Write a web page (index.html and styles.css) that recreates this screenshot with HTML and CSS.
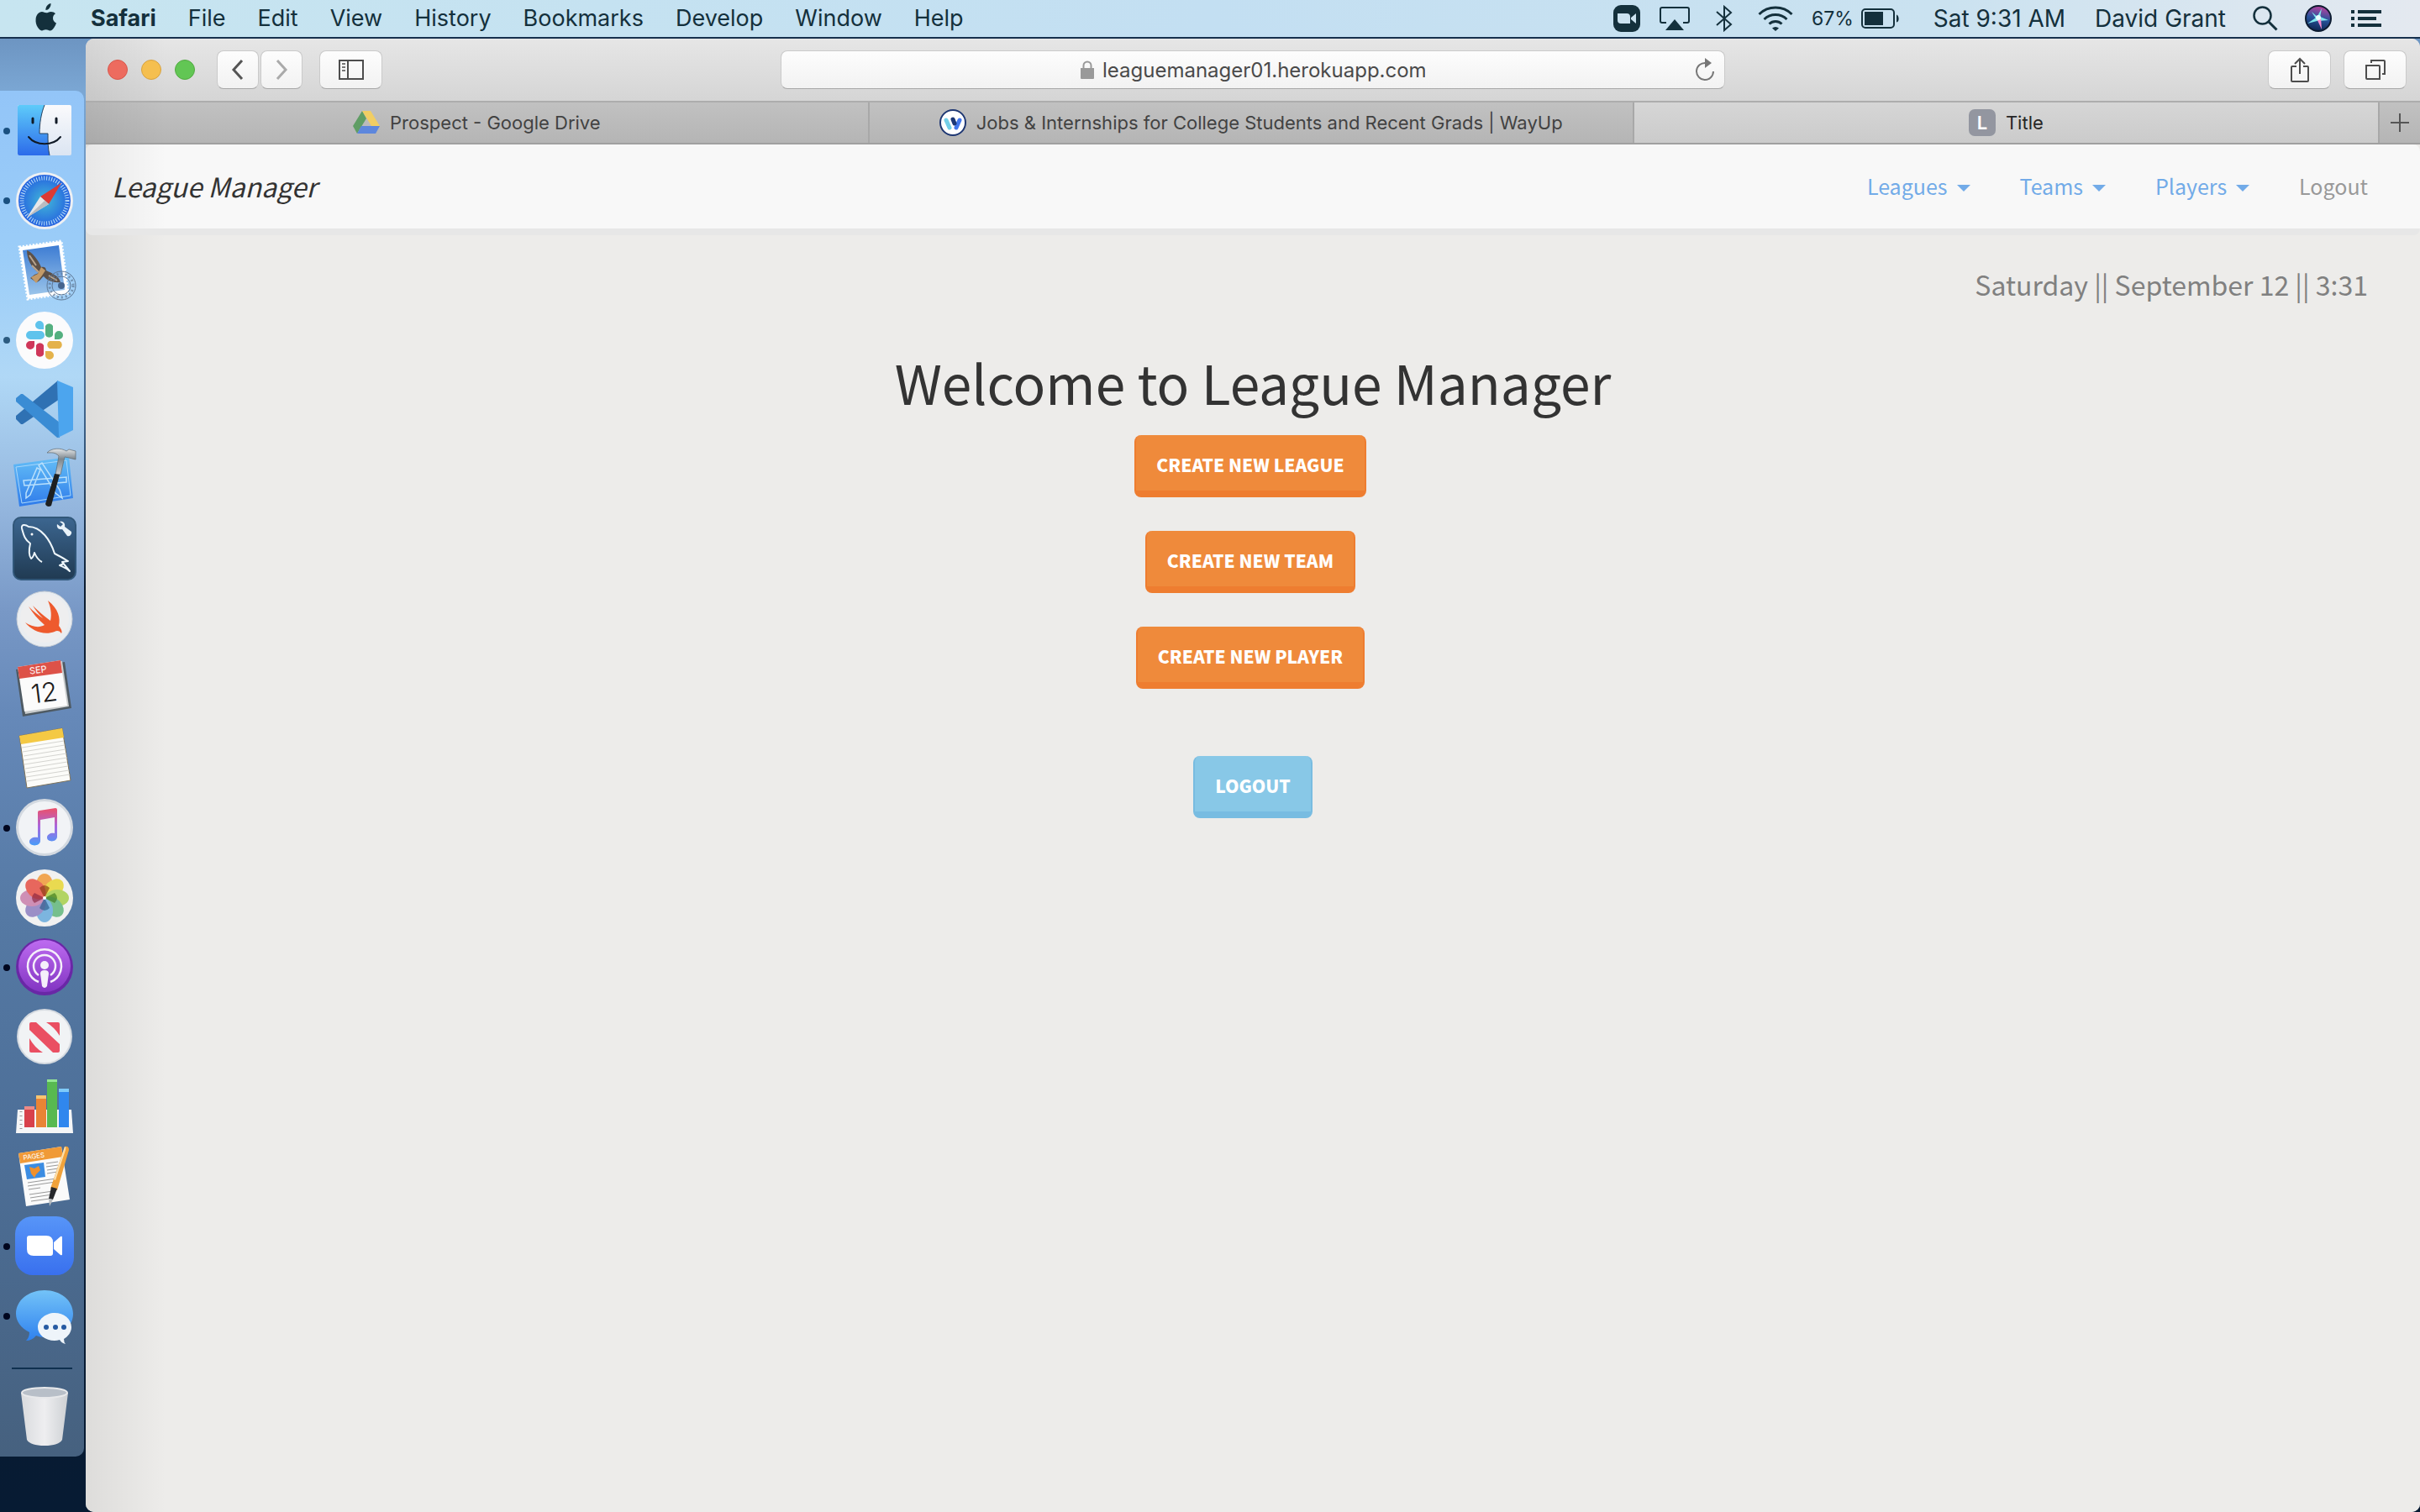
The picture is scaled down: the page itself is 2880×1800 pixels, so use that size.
FILE: index.html
```html
<!DOCTYPE html>
<html lang="en">
<head>
<meta charset="utf-8">
<meta name="viewport" content="width=device-width, initial-scale=1">
<title>Title</title>
<link rel="stylesheet" href="styles.css">
</head>
<body>
<header class="menubar">
  <nav class="menus" aria-label="Application menu">
    <svg class="apple" width="26" height="38" viewBox="0 0 26 38" aria-hidden="true"><path fill="currentColor" d="M18.5 1c.2 2.300-.6 4.200-1.800 5.700-1.200 1.500-2.700 2.300-4.300 2.200-.2-2.200.7-4.200 1.900-5.500C15.500 2 17.200 1.100 18.500 1zM24 13.200c-2 1.200-3 3-3 5.300 0 2.800 1.500 4.800 4 5.900-.6 1.900-1.500 3.700-2.600 5.300-1.500 2.200-2.900 3.800-4.900 3.800s-2.600-1.200-4.900-1.200-3.100 1.200-4.900 1.200c-1.900 0-3.300-1.700-4.800-3.900C1 26.700.2 23.200.6 19.600c.4-4.900 3.500-8.600 7.300-8.600 2.100 0 3.500 1.300 5.200 1.300 1.600 0 3-1.400 5.600-1.400 2.100 0 4 .9 5.300 2.300z"/></svg>
    <a class="app-name" href="#">Safari</a>
    <a href="#">File</a>
    <a href="#">Edit</a>
    <a href="#">View</a>
    <a href="#">History</a>
    <a href="#">Bookmarks</a>
    <a href="#">Develop</a>
    <a href="#">Window</a>
    <a href="#">Help</a>
  </nav>
  <div class="status">
    <svg width="32" height="32" viewBox="0 0 32 32" aria-hidden="true"><rect width="32" height="32" rx="9" fill="currentColor"/><path fill="#cbe2f0" d="M5 10h11a4 4 0 0 1 4 4v8H9a4 4 0 0 1-4-4zM21 15l6-5v12l-6-5z"/></svg>
    <svg width="38" height="30" viewBox="0 0 38 30" aria-hidden="true"><path d="M9 20H4a2 2 0 0 1-2-2V4a2 2 0 0 1 2-2h30a2 2 0 0 1 2 2v14a2 2 0 0 1-2 2h-5" fill="none" stroke="currentColor" stroke-width="2"/><path d="M19 16l11 13H8z" fill="currentColor"/></svg>
    <svg width="20" height="32" viewBox="0 0 20 32" aria-hidden="true"><path d="M1 8l17 15-8 7V2l8 7L1 24" fill="none" stroke="currentColor" stroke-width="2"/></svg>
    <svg width="42" height="30" viewBox="0 0 42 30" aria-hidden="true"><g fill="none" stroke="currentColor" stroke-width="3"><path d="M1.500 10a28 28 0 0 1 39 0M7.500 16a19.500 19.500 0 0 1 27 0M13.500 21.500a11 11 0 0 1 15 0"/></g><path d="M17 26.500a6 6 0 0 1 8 0L21 30z" fill="currentColor"/></svg>
    <span class="battery"><span>67%</span>
    <svg width="46" height="24" viewBox="0 0 46 24" aria-hidden="true"><rect x="1" y="1" width="38" height="22" rx="4" fill="none" stroke="currentColor" stroke-width="2"/><rect x="4" y="4" width="22" height="16" fill="currentColor"/><path d="M42 7.500c3 .5 4 8.500 0 9z" fill="currentColor"/></svg></span>
    <time class="clock">Sat 9:31 AM</time>
    <span class="user">David Grant</span>
    <svg width="30" height="30" viewBox="0 0 30 30" aria-hidden="true"><g fill="none" stroke="currentColor"><circle cx="11.500" cy="11.500" r="10" stroke-width="2.500"/><path d="M18.500 18.500l10 10" stroke-width="3"/></g></svg>
    <svg class="siri" width="32" height="32" viewBox="0 0 32 32" aria-hidden="true"><defs><linearGradient id="siri" x1=".6" y1="0" x2=".4" y2="1"><stop offset="0" stop-color="#c041a0"/><stop offset=".5" stop-color="#27539c"/><stop offset="1" stop-color="#0d2450"/></linearGradient></defs><circle cx="16" cy="16" r="15" fill="url(#siri)" stroke="#0c1b30" stroke-width="2"/><path d="M16 15L8 8l5 8zM18 15l2-11-6 11zM16 13l12 5-12 1zM16 13L3 22l15-4z" fill="#7fe6ec"/><path d="M14 16l6 13-1-14z" fill="#f58bd0"/><circle cx="16" cy="15" r="3" fill="#e8ffff"/></svg>
    <svg width="36" height="20" viewBox="0 0 36 20" aria-hidden="true"><path fill="currentColor" d="M0 0h4v4H0zM8 0h28v4H8zM0 8h4v4H0zM8 8h22v4H8zM0 16h4v4H0zM8 16h28v4H8z"/></svg>
  </div>
</header>

<div class="desktop">
  <nav class="dock" aria-label="Dock">
    <ul>
      <li class="run run-light"><svg viewBox="0 0 100 83"><defs><linearGradient id="fa" x2="0" y2="1"><stop stop-color="#5ecbfa"/><stop offset="1" stop-color="#2c6bea"/></linearGradient><linearGradient id="fb" x2="0" y2="1"><stop stop-color="#fafafc"/><stop offset="1" stop-color="#dbe5f2"/></linearGradient></defs><rect x="21" y="11" width="64" height="60" rx="2" fill="url(#fb)"/><path d="M23 11h30c-4 10-6 22-6 34h10c0 9 0 18 2 26H23a2 2 0 0 1-2-2V13a2 2 0 0 1 2-2z" fill="url(#fa)"/><path d="M53 11c-4 10-6 22-6 34h10c0 9 0 18 2 26" fill="none" stroke="#26425f" stroke-width="1"/><path d="M39 27v5M67 27v5" stroke="#101a26" stroke-width="3" stroke-linecap="round"/><path d="M34 49c9 11 29 11 38 0" fill="none" stroke="#101a26" stroke-width="2" stroke-linecap="round"/></svg></li>
      <li class="run run-light"><svg viewBox="0 0 100 83"><defs><radialGradient id="sa"><stop stop-color="#42b8d8"/><stop offset="1" stop-color="#2563e0"/></radialGradient></defs><circle cx="53" cy="42" r="34" fill="#eef0f3"/><circle cx="53" cy="42" r="31" fill="url(#sa)"/><circle cx="53" cy="42" r="27" fill="none" stroke="#b9dcf8" stroke-width="5" stroke-dasharray="1 2"/><path d="M73 21L58 46l-10-9z" fill="#dc3a33"/><path d="M32 62l16-25 10 9z" fill="#e8e8e8"/><path d="M32 62l21-20 5 4z" fill="#b9bcc0"/></svg></li>
      <li><svg viewBox="0 0 100 83"><defs><linearGradient id="ma" x2="0" y2="1"><stop stop-color="#3d7cd3"/><stop offset="1" stop-color="#9ac4ea"/></linearGradient></defs><path d="M23 14l50-7 8 62-48 7z" fill="#fff" stroke="#fff" stroke-width="3" stroke-dasharray="2 2"/><path d="M27 18l43-6 7 53-42 6z" fill="url(#ma)"/><path d="M32 18c6 2 14 12 17 20 3-1 6 0 6 4 6 3 15 6 17 14-8 1-16-2-20-7-3 2-4 6-9 7l-7-5 5-4 5-2c-8-6-14-16-14-27z" fill="#5d5047"/><path d="M37 50l8-4 4-8 5 4-4 6-7 9z" fill="#c39a68"/><path d="M35 24l8 12M38 36l8 8M58 48l10 6" stroke="#b8a48e" stroke-width="2"/><g fill="none" stroke="#5d7693"><circle cx="73" cy="60" r="17"/><circle cx="73" cy="60" r="11"/><circle cx="73" cy="60" r="14" stroke-width="3" stroke-dasharray="2 3" opacity=".7"/></g><circle cx="73" cy="60" r="4" fill="#46658e"/></svg></li>
      <li class="run run-mid"><svg viewBox="0 0 100 83"><circle cx="53" cy="42" r="34" fill="#fbfbfc"/><path fill="#5fc3ec" d="M36 31h12a5 5 0 0 1 0 10H36a5 5 0 0 1 0-10zM52 29h-5a5 5 0 1 1 5-5z"/><path fill="#54b080" d="M54 25a5 5 0 0 1 9 0v11a5 5 0 0 1-9 0zM65 41v-5a5 5 0 1 1 5 5z"/><path fill="#cf375a" d="M43 48a5 5 0 0 1 9 0v11a5 5 0 0 1-9 0zM41 43v5a5 5 0 1 1-5-5z"/><path fill="#e4b24a" d="M59 43h12a5 5 0 0 1 0 9H59a5 5 0 0 1 0-9zM54 55h5a5 5 0 1 1-5 5z"/></svg></li>
      <li><svg viewBox="0 0 100 83"><path d="M69 7l2 22-44 30h-2l-6-6v-4z" fill="#2f71b3"/><path d="M19 28l6-5h2l44 34v18h-3L19 32z" fill="#3a8cd4"/><path d="M68 7l19 8v51l-18 9 1-2z" fill="#4ca5ee"/></svg></li>
      <li><svg viewBox="0 0 100 83"><defs><linearGradient id="xa" x2="0" y2="1"><stop stop-color="#64bff7"/><stop offset="1" stop-color="#2f7bea"/></linearGradient><linearGradient id="xb" x2="0" y2="1"><stop stop-color="#e4e7e9"/><stop offset=".4" stop-color="#7d868d"/><stop offset="1" stop-color="#c9ced2"/></linearGradient></defs><path d="M16 24l66-9 5 49-64 10z" fill="url(#xa)"/><path d="M19 27l60-8 5 42-58 9z" fill="none" stroke="#a8d7fb"/><path d="M28 43l51-4v6l-50 4zM44 28l4 2-12 30-5 4v-6zM46 25l4-3 21 32 3 10-8-6z" fill="none" stroke="#b9e0fc" stroke-width="1.500"/><path d="M56 10c5-6 17-6 23-2l3-2 8 2v10l-8-2-5-1-5 21h-6l4-22c-4-5-9-4-14-4z" fill="url(#xb)" stroke="#5f686f" stroke-width=".7"/><path d="M65 35l6 1-10 37c-3 2-6 1-7-2z" fill="#1d2022"/></svg></li>
      <li><svg viewBox="0 0 100 83"><defs><linearGradient id="qa" x2="0" y2="1"><stop stop-color="#3c6690"/><stop offset="1" stop-color="#203a52"/></linearGradient></defs><rect x="16" y="4" width="74" height="74" rx="9" fill="url(#qa)" stroke="#315779" stroke-width="2"/><path d="M50 57c-4-2-7-6-9-11-1 4-2 6-4 7-3-4-3-9-1-18-7-5-8-11-10-18-1-5 4-5 8-2 15 0 26 16 31 32 6 3 11 6 16 9l-7 1 9 11c-4-4-8-5-12-7l5-2" fill="none" stroke="#eef6fb" stroke-width="2" stroke-linejoin="round"/><circle cx="38" cy="24" r="1.500" fill="#fff"/><path d="M71 9c4-1 7 2 6 6l8 6a4 4 0 0 1-5 5l-6-8c-4 1-7-2-6-6l4 3 3-3z" fill="#e9f3fa"/></svg></li>
      <li><svg viewBox="0 0 100 83"><circle cx="53" cy="42" r="33" fill="#e9edf1" stroke="#c7ced6" stroke-width="1"/><circle cx="53" cy="41" r="29" fill="#eeeeef"/><path d="M57 20c13 10 15 21 13 30 4 5 4 8 3 9-3-4-6-3-8-2-13 5-27-1-35-11 8 5 16 7 23 3-8-7-14-14-19-22 6 6 11 10 17 14-5-5-9-10-12-15 7 7 14 13 21 18 2-8 0-17-3-24z" fill="#ee5a2d"/></svg></li>
      <li><svg viewBox="0 0 100 83"><path d="M19 19l58-9 8 55-58 10z" fill="#4e5a63"/><path d="M22 17l52-8 8 54-52 9z" fill="#c9cccd"/><path d="M21 16l51-8 8 54-51 7z" fill="#fbfbfb"/><path d="M21 16l51-8 2 15-51 7z" fill="#dd5248"/><g transform="rotate(-7 50 42)"><text x="48" y="23" font-size="11" text-anchor="middle" fill="#fff">SEP</text><text x="52" y="58" font-size="31" font-weight="300" text-anchor="middle" fill="#1b1b1b">12</text></g></svg></li>
      <li><svg viewBox="0 0 100 83"><path d="M23 15l51-9 10 62-52 9z" fill="#fcfcf9" stroke="#80745a" stroke-width="1"/><path d="M23 15l51-9 2 11-51 8z" fill="#f4c944"/><path d="M26 29l50-8M27 34l50-8M28 39l50-8M28 44l51-8M29 49l51-8M30 54l50-8M31 59l50-8M31 64l51-8M32 69l51-8" stroke="#d4d4d0" stroke-width="1"/></svg></li>
      <li class="run"><svg viewBox="0 0 100 83"><defs><linearGradient id="mu" x2="0" y2="1"><stop stop-color="#ec5069"/><stop offset=".5" stop-color="#a866df"/><stop offset="1" stop-color="#489cf8"/></linearGradient></defs><circle cx="53" cy="41" r="34" fill="#d3d9e0"/><circle cx="53" cy="41" r="31" fill="#f1f3f6"/><path d="M45 23q0-2 2-2l19-3q2 0 2 2v32c0 7-12 7-12 1 0-4 5-6 9-5V29l-17 3v25c0 7-13 7-13 1 0-4 5-6 10-5z" fill="url(#mu)"/></svg></li>
      <li><svg viewBox="0 0 100 83"><circle cx="53" cy="42" r="34" fill="#f1f1f1"/><g opacity=".85"><ellipse cx="53" cy="27" rx="10" ry="14" fill="#f19a38"/><ellipse cx="53" cy="27" rx="10" ry="14" fill="#e8d735" transform="rotate(45 53 42)"/><ellipse cx="53" cy="27" rx="10" ry="14" fill="#a8cf4b" transform="rotate(90 53 42)"/><ellipse cx="53" cy="27" rx="10" ry="14" fill="#61b77c" transform="rotate(135 53 42)"/><ellipse cx="53" cy="27" rx="10" ry="14" fill="#68abdd" transform="rotate(180 53 42)"/><ellipse cx="53" cy="27" rx="10" ry="14" fill="#8d7fc0" transform="rotate(225 53 42)"/><ellipse cx="53" cy="27" rx="10" ry="14" fill="#c87eab" transform="rotate(270 53 42)"/><ellipse cx="53" cy="27" rx="10" ry="14" fill="#e65044" transform="rotate(315 53 42)"/></g><g opacity=".65"><path d="M53 42l-6-12q6-6 12 0z" fill="#8a3a10"/><path d="M53 42l12-6q6 6 0 12z" fill="#3f7a1c"/><path d="M53 42l6 12q-6 6-12 0z" fill="#2b5d8c"/><path d="M53 42l-12 6q-6-6 0-12z" fill="#8a2440"/></g><circle cx="53" cy="42" r="2" fill="#fff"/></svg></li>
      <li class="run"><svg viewBox="0 0 100 83"><defs><linearGradient id="po" x2="0" y2="1"><stop stop-color="#bd6bf0"/><stop offset="1" stop-color="#8235c2"/></linearGradient></defs><circle cx="53" cy="41" r="34" fill="#6927a6"/><circle cx="53" cy="40" r="31" fill="url(#po)"/><g fill="none" stroke="#f5effa" stroke-width="2.500"><path d="M46 59a20 20 0 1 1 14 0M46 51a13 13 0 1 1 14 0"/></g><circle cx="53" cy="39" r="5" fill="#f5effa"/><path d="M48 49q0-4 5-4t5 4l-2 15q-3 4-6 0z" fill="#f5effa"/></svg></li>
      <li><svg viewBox="0 0 100 83"><circle cx="53" cy="41" r="33" fill="#d5dae0"/><circle cx="53" cy="41" r="31" fill="#f1f3f5"/><path d="M35 26q0-2 2-2h6l28 26v8q0 2-2 2h-6L35 33zM55 24h14q2 0 2 2v14q-6-10-16-16zM35 43q6 11 16 17H37q-2 0-2-2z" fill="#ea4f62"/></svg></li>
      <li><svg viewBox="0 0 100 83"><path d="M21 45h64l2 28H19z" fill="#f5f6f7"/><path d="M25 47v22" stroke="#999" stroke-width="3" stroke-dasharray="1 4"/><path d="M29 41h12v25H29z" fill="#d8414b"/><path d="M43 28h12v38H43z" fill="#e98435"/><path d="M56 9h12v57H56z" fill="#58b950"/><path d="M70 20h12v46H70z" fill="#3087ee"/><path d="M29 41h12v4H29z" fill="#ec8a86"/><path d="M43 28h12v4H43z" fill="#f7c471"/><path d="M56 9h12v3H56z" fill="#94e793"/><path d="M70 20h12v4H70z" fill="#7fcbfa"/></svg></li>
      <li><svg viewBox="0 0 100 83"><path d="M22 14l51-8 10 63-52 8z" fill="#fafafa"/><path d="M22 14l51-8 2 12-51 8z" fill="#f09a37"/><text x="28" y="22" font-size="8" fill="#fff" transform="rotate(-8 28 22)">PAGES</text><path d="M29 28l23-3 2 17-22 3z" fill="#3b8ce2"/><path d="M35 30l6 2 5-3 2 5-5 5-2 4-4-5z" fill="#f0902c"/><path d="M55 26l14-2M55 30l14-2M56 34l13-2M56 38l12-2M33 49l34-5M33 53l33-5M34 57l14-2M35 63l28-4M36 67l26-4M37 71l22-3" stroke="#9a9a9a" stroke-width="1"/><path d="M77 6q5-1 5 4L68 58l-8-2z" fill="#f0a23b"/><path d="M77 6q2 0 1 4L66 46l-2-1z" fill="#fbe0ae"/><path d="M61 54l7 2-5 13-5-1z" fill="#26282b"/><path d="M58 68l5 1-4 8z" fill="#b9bdc0"/></svg></li>
      <li class="run"><svg viewBox="0 0 100 83"><defs><linearGradient id="zo" x2="0" y2="1"><stop stop-color="#5795f8"/><stop offset="1" stop-color="#3970ee"/></linearGradient></defs><rect x="18" y="6" width="70" height="70" rx="21" fill="url(#zo)"/><path d="M35 29h20q8 0 8 8v13q0 3-3 3H40q-8 0-8-8V32q0-3 3-3zM64 37l8-7q2-1 2 1v20q0 2-2 1l-8-7z" fill="#fff"/></svg></li>
      <li class="run"><svg viewBox="0 0 100 83"><defs><linearGradient id="me" x2="0" y2="1"><stop stop-color="#73c3f8"/><stop offset="1" stop-color="#2f81ee"/></linearGradient></defs><path d="M53 11c19 0 34 12 34 28S72 67 53 67q-6 0-10-2-5 6-12 6 4-4 4-10C25 56 19 48 19 39c0-16 15-28 34-28z" fill="url(#me)"/><path d="M65 38c11 0 20 7 20 17 0 6-4 11-9 14q0 4 2 6-5-1-7-5-3 1-6 1c-11 0-20-7-20-16s9-17 20-17z" fill="#eef4fa"/><g fill="#275aa2"><circle cx="55" cy="55" r="3"/><circle cx="66" cy="55" r="3"/><circle cx="76" cy="55" r="3"/></g></svg></li>
      <li class="trash"><svg viewBox="0 0 100 83"><defs><linearGradient id="tr"><stop stop-color="#d9dbde"/><stop offset=".5" stop-color="#eeeef0"/><stop offset="1" stop-color="#cdd0d4"/></linearGradient></defs><path d="M25 13h56l-7 56q-4 7-21 7t-21-7z" fill="url(#tr)"/><ellipse cx="53" cy="13" rx="27" ry="6" fill="#b8bfc8" stroke="#e8e9eb" stroke-width="2"/></svg></li>
    </ul>
  </nav>

  <section class="window">
    <div class="toolbar">
      <div class="tools">
        <div class="lights"><span class="light red"></span><span class="light yellow"></span><span class="light green"></span></div>
        <div class="history">
          <button class="tool narrow" aria-label="Back"><svg width="16" height="26" viewBox="0 0 16 26"><path d="M13 2L3 13l10 11" fill="none" stroke="#555" stroke-width="3"/></svg></button>
          <button class="tool narrow" aria-label="Forward"><svg width="16" height="26" viewBox="0 0 16 26"><path d="M3 2l10 11L3 24" fill="none" stroke="#aaa" stroke-width="3"/></svg></button>
        </div>
        <button class="tool" aria-label="Sidebar"><svg width="30" height="24" viewBox="0 0 30 24"><path d="M1 1h28v22H1zM11 1v22" fill="none" stroke="#4d4d4d" stroke-width="2"/><path d="M4 5h4M4 9h4M4 13h4" stroke="#777" stroke-width="2"/></svg></button>
      </div>
      <form class="address">
        <span class="site">
          <svg width="16" height="22" viewBox="0 0 16 22" aria-hidden="true"><path d="M0 9h16v12a1 1 0 0 1-1 1H1a1 1 0 0 1-1-1z" fill="#999"/><path d="M3.500 10V6a4.500 4.500 0 0 1 9 0v4" fill="none" stroke="#999" stroke-width="2"/></svg>
          <input type="text" aria-label="Address" value="leaguemanager01.herokuapp.com">
        </span>
        <button type="button" class="reload" aria-label="Reload"><svg width="26" height="28" viewBox="0 0 26 28"><path d="M14 6a10 10 0 1 0 9 10" fill="none" stroke="#777" stroke-width="2"/><path d="M13 0l8 6-8 6z" fill="#777"/></svg></button>
      </form>
      <div class="tools end">
        <button class="tool" aria-label="Share"><svg width="24" height="32" viewBox="0 0 24 32"><path d="M8 12H3a1 1 0 0 0-1 1v16a1 1 0 0 0 1 1h18a1 1 0 0 0 1-1V13a1 1 0 0 0-1-1h-5M12 21V3M6 9l6-6 6 6" fill="none" stroke="#4d4d4d" stroke-width="2"/></svg></button>
        <button class="tool" aria-label="Show tabs"><svg width="26" height="26" viewBox="0 0 26 26"><path d="M2 8h15q1 0 1 1v15H3q-1 0-1-1zM8 5V2h15q1 0 1 1v15h-3" fill="none" stroke="#4d4d4d" stroke-width="2"/></svg></button>
      </div>
    </div>
    <nav class="tabs" aria-label="Tabs">
      <a class="tab first" href="#"><svg width="32" height="28" viewBox="0 0 32 28" aria-hidden="true"><path d="M11 0L0 18l5 9L16 9z" fill="#5f9d64"/><path d="M11 0h10l11 18H22z" fill="#f1ce63"/><path d="M10 18h22l-5 9H5z" fill="#5d87dd"/></svg>Prospect - Google Drive</a>
      <a class="tab second" href="#"><svg width="32" height="32" viewBox="0 0 32 32" aria-hidden="true"><circle cx="16" cy="16" r="15" fill="#fff" stroke="#1e3773" stroke-width="2"/><path d="M8 13l4 9" stroke="#73cfe8" stroke-width="5" stroke-linecap="round"/><path d="M24 13l-4 9" stroke="#4177ed" stroke-width="5" stroke-linecap="round"/><path d="M16 12l2 5" stroke="#1b3776" stroke-width="5" stroke-linecap="round"/></svg>Jobs &amp; Internships for College Students and Recent Grads | WayUp</a>
      <a class="tab third active" href="#"><span class="favicon">L</span>Title</a>
      <button class="new-tab" aria-label="New tab"><svg width="22" height="22" viewBox="0 0 22 22"><path d="M11 0v22M0 11h22" stroke="#555" stroke-width="2"/></svg></button>
    </nav>

    <div class="page">
      <header class="navbar">
        <a class="brand" href="#">League Manager</a>
        <nav class="links" aria-label="Site">
          <a class="dropdown" href="#">Leagues</a>
          <a class="dropdown" href="#">Teams</a>
          <a class="dropdown" href="#">Players</a>
          <a class="logout-link" href="#">Logout</a>
        </nav>
      </header>
      <main class="content">
        <p class="date">Saturday || September 12 || 3:31</p>
        <h1>Welcome to League Manager</h1>
        <div class="create">
          <button class="btn">CREATE NEW LEAGUE</button>
          <button class="btn">CREATE NEW TEAM</button>
          <button class="btn">CREATE NEW PLAYER</button>
        </div>
        <button class="btn info">LOGOUT</button>
      </main>
    </div>
  </section>
</div>
</body>
</html>
```
FILE: styles.css
```css
* { box-sizing: border-box; }

:root {
  --shade: linear-gradient(to right, rgba(0, 0, 0, .065), rgba(0, 0, 0, 0) 96px);
}

body {
  margin: 0;
  min-height: 100vh;
  display: flex;
  flex-direction: column;
  font-family: Inter, "Liberation Sans", sans-serif;
  background: linear-gradient(#6388b5, #7ba7d4 110px, #3d6289 500px, #0b1c30 700px, #071b33);
}

a { color: inherit; text-decoration: none; }
button, input { font: inherit; margin: 0; }
svg { display: block; flex: none; }

/* System menu bar */
.menubar {
  display: flex;
  justify-content: space-between;
  align-items: center;
  height: 46px;
  padding: 0 46px 0 42px;
  border-bottom: 2px solid #16304d;
  background: linear-gradient(to right, #c7e5f0, #c3dff2 50%, #cae2f0 80%, #e4e9f0);
  color: #14303c;
  font-size: 27px;
  line-height: 44px;
  white-space: nowrap;
}
.menus { display: flex; align-items: center; gap: 38px; }
.app-name { font-weight: 700; margin-left: 2px; }
.status { display: flex; align-items: center; gap: 32px; font-size: 28px; }
.status svg:nth-child(1) { margin-right: -10px; }
.status svg:nth-child(2) { margin-right: -2px; }
.status svg:nth-child(3) { margin-right: -2px; }
.battery { display: flex; align-items: center; gap: 9px; margin: 0 10px 0 -10px; font-size: 23px; }
.clock { margin-right: 3px; }
.siri { margin-right: -9px; }

/* Desktop */
.desktop { flex: 1; display: flex; align-items: flex-start; gap: 2px; }

.dock {
  width: 100px;
  margin-top: 62px;
  padding: 6px 0 1px;
  border-radius: 0 10px 10px 0;
  background: linear-gradient(#93c5f8, #9bcdf8 200px, #b0d8f6 340px, #93b5dd 500px, #7898c6 620px, #6689b9 740px, #5579a4 980px, #4d6f98 1250px, #46617f);
}
.dock ul { margin: 0; padding: 0; list-style: none; }
.dock li { position: relative; height: 83px; }
.dock svg { width: 100px; height: 83px; }
.run::before {
  content: "";
  position: absolute;
  left: 4px;
  top: 38px;
  width: 8px;
  height: 8px;
  border-radius: 50%;
  background: #00061f;
}
.run-light::before { background: #1a5080; }
.run-mid::before { background: #2c5b80; }
.dock .trash {
  height: 125px;
  padding-top: 37px;
}
.trash::before {
  content: "";
  position: absolute;
  left: 14px;
  right: 14px;
  top: 20px;
  height: 2px;
  background: #10304f;
}

/* Browser window */
.window {
  flex: 1;
  align-self: stretch;
  min-width: 0;
  display: flex;
  flex-direction: column;
  border-radius: 10px;
  overflow: hidden;
  background: #edecea;
}

.toolbar {
  display: grid;
  grid-template-columns: 1fr minmax(0, 1124px) 1fr;
  align-items: center;
  height: 76px;
  border-bottom: 2px solid #adadad;
  background: var(--shade), linear-gradient(#e6e6e6, #d5d5d5);
}
.tools { display: flex; align-items: center; padding-left: 26px; }
.end { justify-content: flex-end; gap: 15px; padding-right: 16px; }
.lights { display: flex; gap: 16px; margin-right: 26px; }
.light { width: 24px; height: 24px; border-radius: 50%; border: 1px solid; }
.red { background: #ed6b5f; border-color: #d8574c; }
.yellow { background: #f5bf4f; border-color: #d8a23f; }
.green { background: #62c654; border-color: #52aa42; }
.history { display: flex; gap: 2px; margin-right: 20px; }
.tool {
  display: grid;
  place-items: center;
  width: 75px;
  height: 46px;
  padding: 0;
  border: 1px solid #cacaca;
  border-bottom-color: #a8a8a8;
  border-radius: 8px;
  background: linear-gradient(#fdfdfd, #f2f2f2);
}
.narrow { width: 50px; }

.address {
  display: grid;
  grid-template-columns: 1fr auto 1fr;
  align-items: center;
  height: 46px;
  padding: 0 10px;
  border: 1px solid #cacaca;
  border-bottom-color: #a8a8a8;
  border-radius: 8px;
  background: linear-gradient(#fdfdfd, #f2f2f2);
}
.site { grid-column: 2; display: flex; align-items: center; gap: 10px; }
.site input {
  width: 384px;
  padding: 2px 0 0;
  border: 0;
  outline: 0;
  background: none;
  color: #4a4a4a;
  font-size: 24px;
  line-height: 32px;
}
.reload { justify-self: end; padding: 0; border: 0; background: none; }

.tabs {
  display: flex;
  height: 50px;
  border-bottom: 2px solid #a0a0a0;
  background: var(--shade), linear-gradient(#c1c1c1, #b5b5b5);
}
.tab {
  display: flex;
  align-items: center;
  justify-content: center;
  gap: 12px;
  min-width: 0;
  border-right: 2px solid #a8a8a8;
  color: #424242;
  font-size: 22px;
  white-space: nowrap;
}
.first { flex: 41 1 0; }
.second { flex: 40 1 0; }
.third { flex: 39 1 0; }
.active { color: #262626; background: linear-gradient(#d6d6d6, #cbcbcb); }
.favicon {
  width: 32px;
  height: 32px;
  border-radius: 7px;
  background: #9396a0;
  color: #fff;
  font-weight: 600;
  line-height: 32px;
  text-align: center;
}
.new-tab { width: 48px; padding: 0; display: grid; place-items: center; border: 0; background: none; }

/* Web page */
.page {
  flex: 1;
  background: var(--shade), #edecea;
  color: #333;
  font-family: "Noto Sans CJK SC", "Open Sans", sans-serif;
}
.navbar {
  display: flex;
  justify-content: space-between;
  align-items: center;
  height: 108px;
  padding: 0 62px 3px 31px;
  border-bottom: 8px solid #e7e7e7;
  border-radius: 8px;
  background: var(--shade), #f8f8f8;
}
.brand { font-size: 32px; font-style: italic; }
.links { display: flex; gap: 59px; color: #72abe8; font-size: 25px; }
.dropdown { display: flex; align-items: center; gap: 11px; }
.dropdown::after {
  content: "";
  margin-top: 6px;
  border: 8px solid transparent;
  border-top-color: currentColor;
  border-bottom: 0;
}
.logout-link { color: #999; }

.content {
  display: flex;
  flex-direction: column;
  align-items: center;
  padding: 35px 62px;
}
.date {
  align-self: flex-end;
  margin: 0 0 58px;
  color: #808080;
  font-size: 32px;
  line-height: 46px;
}
h1 { margin: 0 0 29px; font-size: 64px; line-height: 70px; font-weight: 400; }
.create {
  display: flex;
  flex-direction: column;
  align-items: center;
  gap: 40px;
  margin: 0 6px 80px 0;
}
.btn {
  padding: 25px 24px 21px;
  border: 0 solid #ee7d30;
  border-width: 0 2px 8px;
  border-radius: 8px;
  background: #ef8a3b;
  color: #fff;
  font-size: 21px;
  line-height: 20px;
  font-weight: 900;
}
.info { background: #88c8e7; border-color: #78bce1; }
```
